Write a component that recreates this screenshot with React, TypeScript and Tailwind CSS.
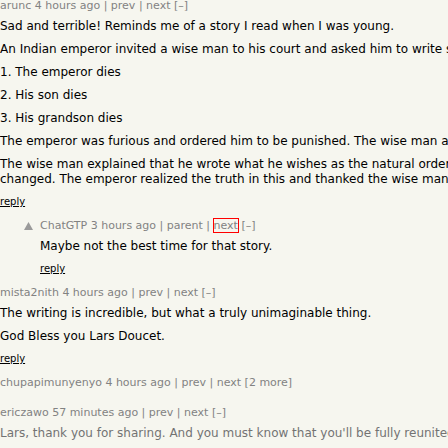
const font = { fontFamily: '"DejaVu Sans", Verdana, Geneva, sans-serif' };

type Comment = {
  user: string;
  age: string;
  links: string;
  indent?: boolean;
  paras?: string[][];
  faded?: boolean;
  collapsed?: boolean;
  focusNext?: boolean;
};

const comments: Comment[] = [
  {
    user: 'arunc',
    age: '4 hours ago',
    links: 'prev | next [–]',
    paras: [
      ['Sad and terrible! Reminds me of a story I read when I was young.'],
      ['An Indian emperor invited a wise man to his court and asked him to write something'],
      ['1. The emperor dies'],
      ['2. His son dies'],
      ['3. His grandson dies'],
      ['The emperor was furious and ordered him to be punished. The wise man asked'],
      [
        'The wise man explained that he wrote what he wishes as the natural order of',
        'changed. The emperor realized the truth in this and thanked the wise man for',
      ],
    ],
  },
  {
    user: 'ChatGTP',
    age: '3 hours ago',
    links: 'parent |',
    indent: true,
    focusNext: true,
    paras: [['Maybe not the best time for that story.']],
  },
  {
    user: 'mista2nith',
    age: '4 hours ago',
    links: 'prev | next [–]',
    paras: [
      ['The writing is incredible, but what a truly unimaginable thing.'],
      ['God Bless you Lars Doucet.'],
    ],
  },
  {
    user: 'chupapimunyenyo',
    age: '4 hours ago',
    links: 'prev | next [2 more]',
    collapsed: true,
  },
  {
    user: 'ericzawo',
    age: '57 minutes ago',
    links: 'prev | next [–]',
    faded: true,
    paras: [["Lars, thank you for sharing. And you must know that you'll be fully reunited"]],
  },
];

function CommentRow({ c }: { c: Comment }) {
  return (
    <div className={`flex ${c.collapsed ? 'mb-[18px]' : 'mb-[12px]'}`}>
      {c.indent && (
        <div className="w-[40px] shrink-0 flex justify-end pr-[7px] pt-[2px]">
          <svg width="9" height="8" viewBox="0 0 9 8">
            <path d="M4.5 0 L9 8 L0 8 Z" fill="#9a9a9a" />
          </svg>
        </div>
      )}
      <div className="flex flex-col min-w-0">
        <div className="text-[11px] leading-[12px] text-[#828282] whitespace-nowrap">
          {c.user} {c.age} | {c.links}
          {c.focusNext && (
            <>
              {' '}
              <span className="outline outline-1 outline-[#ff0000]">next</span> [–]
            </>
          )}
        </div>
        {c.paras && (
          <div className={`mt-[7px] text-[12px] leading-[15px] ${c.faded ? 'text-[#737373]' : 'text-black'}`}>
            {c.paras.map((p, i) => (
              <div key={i} className={`whitespace-nowrap ${i > 0 ? 'mt-[8px]' : ''}`}>
                {p.map((line, j) => (
                  <div key={j}>{line}</div>
                ))}
              </div>
            ))}
          </div>
        )}
        {c.paras && !c.faded && (
          <div className="mt-[8px] text-[10px] leading-[13px] text-black underline">reply</div>
        )}
      </div>
    </div>
  );
}

export default function App() {
  return (
    <div className="w-[448px] h-[448px] overflow-hidden bg-[#f6f6ef]" style={font}>
      {comments.map((c) => (
        <CommentRow key={c.user} c={c} />
      ))}
    </div>
  );
}
